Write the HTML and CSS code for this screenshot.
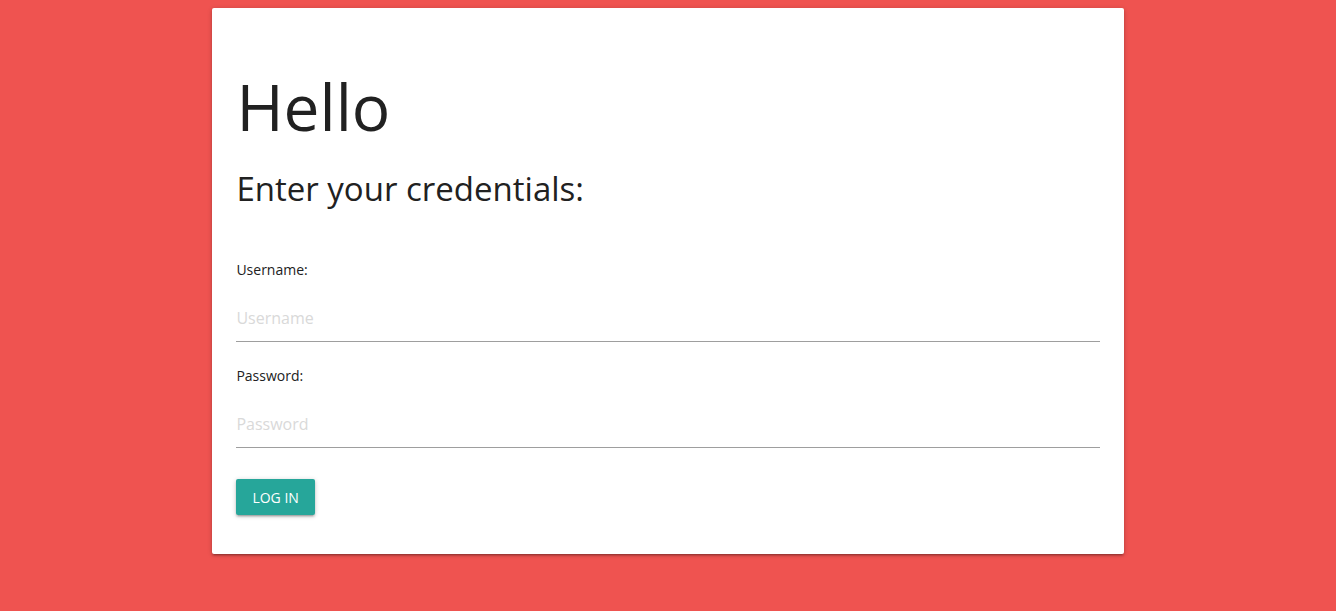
FILE: index.html
```html
<!DOCTYPE html>
<html lang="en">
<head>
<meta charset="utf-8">
<title>Login</title>
<link rel="stylesheet" href="styles.css">
</head>
<body>
<div class="container">
  <div class="col">
    <div class="card">
      <h1 class="title">Hello</h1>
      <h2 class="subtitle">Enter your credentials:</h2>
      <form class="form">
        <label class="field-label" for="username">Username:</label>
        <input class="field-input" id="username" type="text" placeholder="Username">
        <label class="field-label" for="password">Password:</label>
        <input class="field-input" id="password" type="password" placeholder="Password">
        <div class="actions">
          <button class="btn" type="button">Log in</button>
        </div>
      </form>
    </div>
  </div>
</div>
</body>
</html>
```
FILE: styles.css
```css
html, body {
  margin: 0;
  padding: 0;
}
body {
  background: #ef5350;
  font-family: "Open Sans", "Noto Sans", sans-serif;
  color: rgba(0, 0, 0, 0.87);
  min-height: 611px;
}
.container {
  width: 70%;
  margin: 0 auto;
}
.col {
  padding: 0 12px;
}
.card {
  background: #fff;
  margin: 8px 0 16px;
  border-radius: 2px;
  padding: 24px 24px 39px;
  box-shadow: 0 2px 2px 0 rgba(0,0,0,0.14), 0 3px 1px -2px rgba(0,0,0,0.12), 0 1px 5px 0 rgba(0,0,0,0.2);
}
.title {
  font-weight: 400;
  font-size: 64px;
  line-height: 74px;
  margin: 38px 0 25px;
  color: #212121;
}
.subtitle {
  font-weight: 400;
  font-size: 33px;
  line-height: 40px;
  margin: 0;
  color: #212121;
}
.form {
  display: flex;
  flex-direction: column;
  margin-top: 35px;
}
.field-label {
  font-size: 14px;
  line-height: 20px;
  padding: 16px 0 14px;
  color: #212121;
}
.field-input {
  height: 47px;
  border: none;
  border-bottom: 1px solid #9e9e9e;
  margin: 0 0 8px;
  padding: 0;
  font-family: inherit;
  font-size: 16px;
  color: #212121;
  outline: none;
  background: transparent;
}
.field-input::placeholder {
  color: #d9d9d9;
}
.actions {
  padding-top: 23px;
}
.btn {
  height: 36px;
  border: none;
  border-radius: 2px;
  background: #26a69a;
  color: #fff;
  font-family: inherit;
  font-size: 14px;
  text-transform: uppercase;
  padding: 0 16px;
  letter-spacing: 0;
  box-shadow: 0 2px 2px 0 rgba(0,0,0,0.14), 0 3px 1px -2px rgba(0,0,0,0.12), 0 1px 5px 0 rgba(0,0,0,0.2);
}
```
